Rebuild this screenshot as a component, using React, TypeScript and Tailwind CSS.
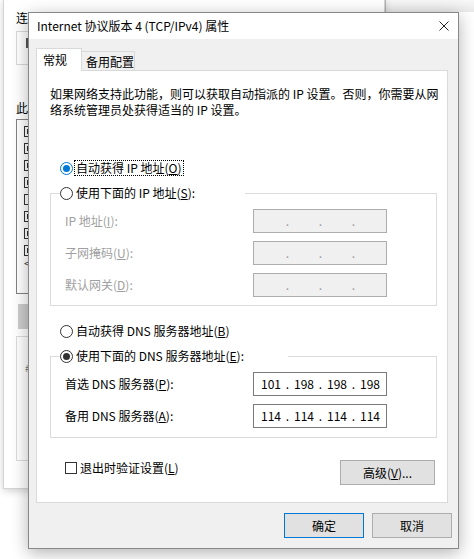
import React from 'react';

const ui = "font-['Noto_Sans_CJK_SC','Noto_Sans',sans-serif] text-[12px] leading-[16px] text-black";

function Radio({ checked = false, focused = false }: { checked?: boolean; focused?: boolean }) {
  return (
    <span
      className={`flex h-[13px] w-[13px] shrink-0 items-center justify-center rounded-full border bg-white ${
        focused ? 'border-[#0078d7]' : 'border-[#333333]'
      }`}
    >
      {checked && <span className={`h-[7px] w-[7px] rounded-full ${focused ? 'bg-[#0078d7]' : 'bg-[#333333]'}`} />}
    </span>
  );
}

function IpBox({ parts, disabled = false }: { parts: string[]; disabled?: boolean }) {
  return (
    <div
      className={`flex h-[24px] w-[134px] items-center border pl-[5px] ${
        disabled ? 'border-[#adadad] bg-[#f0f0f0] text-[#9a9a9a]' : 'border-[#7a7a7a] bg-white text-black'
      }`}
    >
      {parts.map((p, i) => (
        <React.Fragment key={i}>
          {i > 0 && <span className="w-[9px] text-center">.</span>}
          <span className="w-[24px] text-center">{p}</span>
        </React.Fragment>
      ))}
    </div>
  );
}

function Row({ label, parts, disabled = false }: { label: React.ReactNode; parts: string[]; disabled?: boolean }) {
  return (
    <div className="flex h-[24px] items-center">
      <span className={`w-[188px] ${disabled ? 'text-[#a0a0a0]' : 'text-black'}`}>{label}</span>
      <IpBox parts={parts} disabled={disabled} />
    </div>
  );
}

// the network adapter window sitting behind the dialog
function BackWindow() {
  const boxes = [135, 155, 173, 193, 213, 233, 253, 272];
  return (
    <div className="absolute left-[3px] top-[-1px] h-[490px] w-[382px] border-x border-b border-[#d4d4d4] bg-white shadow-[0_2px_8px_rgba(0,0,0,0.18)]">
      <div className={`${ui} flex flex-col pl-[12px]`}>
        <span className="mt-[11px]">连</span>
        <div className="mt-[5px] h-[34px] w-[300px] border border-[#d9d9d9] pl-[9px] pt-[6px]">
          <span className="block h-[10px] w-[2px] bg-[#555]" />
        </div>
        <span className="mt-[35px]">此</span>
        <div className="mt-[3px] flex h-[175px] w-[300px] flex-col border border-[#828282] pl-[7px]">
          {boxes.map((y, i) => (
            <span
              key={y}
              className="mt-[6px] flex h-[11px] w-[11px] items-center justify-center border border-[#333] bg-white"
            >
              {i !== 4 && <span className="h-[5px] w-[5px] bg-[#333]" />}
            </span>
          ))}
          <span className="mt-[1px] text-[11px] leading-[12px] text-[#444]">&lt;</span>
        </div>
        <div className="ml-[2px] mt-[10px] h-[25px] w-[80px] bg-[#cccccc]" />
        <div className="mt-[7px] h-[125px] w-[300px] border border-[#dcdcdc] pl-[8px] pt-[26px]">
          <span className="block text-[10px] leading-[10px] text-[#777]">#</span>
        </div>
      </div>
    </div>
  );
}

export default function App() {
  return (
    <div className={`${ui} relative h-[559px] w-[474px] overflow-hidden bg-white`}>
      <div className="absolute left-[385px] top-0 h-[12px] w-[89px] border-l border-[#bdbdbd] bg-gradient-to-b from-[#f7f7f7] to-[#e9e9e9]" />
      <BackWindow />

      {/* dialog */}
      <div className="absolute left-[28px] top-[12px] flex h-[537px] w-[431px] flex-col border border-[#888888] bg-[#f0f0f0] shadow-[0_4px_16px_rgba(0,0,0,0.3)]">
        <div className="flex h-[26px] items-center justify-between bg-white pl-[8px] pr-[9px]">
          <span>Internet 协议版本 4 (TCP/IPv4) 属性</span>
          <svg width="10" height="10" viewBox="0 0 10 10" className="text-[#222]">
            <path d="M0.5 0.5 L9.5 9.5 M9.5 0.5 L0.5 9.5" stroke="currentColor" strokeWidth="1" fill="none" />
          </svg>
        </div>

        <div className="flex flex-col pl-[7px] pt-[9px]">
          {/* tabs */}
          <div className="flex h-[22px] items-end">
            <div className="relative z-10 mb-[-1px] h-[23px] w-[46px] border-x border-t border-[#d9d9d9] bg-white pl-[6px] pt-[3px]">
              常规
            </div>
            <div className="h-[19px] w-[53px] border-r border-t border-[#d9d9d9] bg-[#f0f0f0] pl-[4px] pt-[2px]">
              备用配置
            </div>
          </div>

          {/* panel */}
          <div className="flex h-[433px] w-[412px] flex-col border border-[#d9d9d9] bg-white pl-[13px] pr-[10px] pt-[15px]">
            <p className="whitespace-nowrap">
              如果网络支持此功能，则可以获取自动指派的 IP 设置。否则，你需要从网
              <br />
              络系统管理员处获得适当的 IP 设置。
            </p>

            <div className="mt-[42px] flex h-[16px] items-center gap-[1px] pl-[10px]">
              <Radio checked focused />
              <span className="border border-dotted border-black px-[1px] leading-[14px]">
                自动获得 IP 地址(<u>O</u>)
              </span>
            </div>

            <fieldset className="mt-[9px] border border-[#dcdcdc] px-[14px] pb-[8px] pt-[8px]">
              <legend className="ml-[-5px] w-[185px]">
                <span className="flex h-[16px] items-center gap-[3px]">
                  <Radio />
                  <span>
                    使用下面的 IP 地址(<u>S</u>):
                  </span>
                </span>
              </legend>
              <div className="flex flex-col gap-[8px]">
                <Row disabled label={<>IP 地址(<u>I</u>):</>} parts={['', '', '', '']} />
                <Row disabled label={<>子网掩码(<u>U</u>):</>} parts={['', '', '', '']} />
                <Row disabled label={<>默认网关(<u>D</u>):</>} parts={['', '', '', '']} />
              </div>
            </fieldset>

            <div className="mt-[17px] flex h-[16px] items-center gap-[3px] pl-[10px]">
              <Radio />
              <span>
                自动获得 DNS 服务器地址(<u>B</u>)
              </span>
            </div>

            <fieldset className="mt-[9px] border border-[#dcdcdc] px-[14px] pb-[9px] pt-[8px]">
              <legend className="ml-[-5px] w-[228px]">
                <span className="flex h-[16px] items-center gap-[3px]">
                  <Radio checked />
                  <span>
                    使用下面的 DNS 服务器地址(<u>E</u>):
                  </span>
                </span>
              </legend>
              <div className="flex flex-col gap-[8px]">
                <Row label={<>首选 DNS 服务器(<u>P</u>):</>} parts={['101', '198', '198', '198']} />
                <Row label={<>备用 DNS 服务器(<u>A</u>):</>} parts={['114', '114', '114', '114']} />
              </div>
            </fieldset>

            <div className="mt-[22px] flex items-start justify-between">
              <div className="flex h-[16px] items-center gap-[3px] pl-[15px]">
                <span className="h-[12px] w-[12px] border border-[#333333] bg-white" />
                <span>
                  退出时验证设置(<u>L</u>)
                </span>
              </div>
              <button className="mr-[2px] h-[25px] w-[95px] border border-[#adadad] bg-[#e1e1e1]">
                高级(<u>V</u>)...
              </button>
            </div>
          </div>

          {/* buttons */}
          <div className="mt-[10px] flex justify-end gap-[8px] pr-[6px]">
            <button className="h-[25px] w-[80px] border border-[#0078d7] bg-[#e1e1e1]">确定</button>
            <button className="h-[25px] w-[80px] border border-[#adadad] bg-[#e1e1e1]">取消</button>
          </div>
        </div>
      </div>
    </div>
  );
}
